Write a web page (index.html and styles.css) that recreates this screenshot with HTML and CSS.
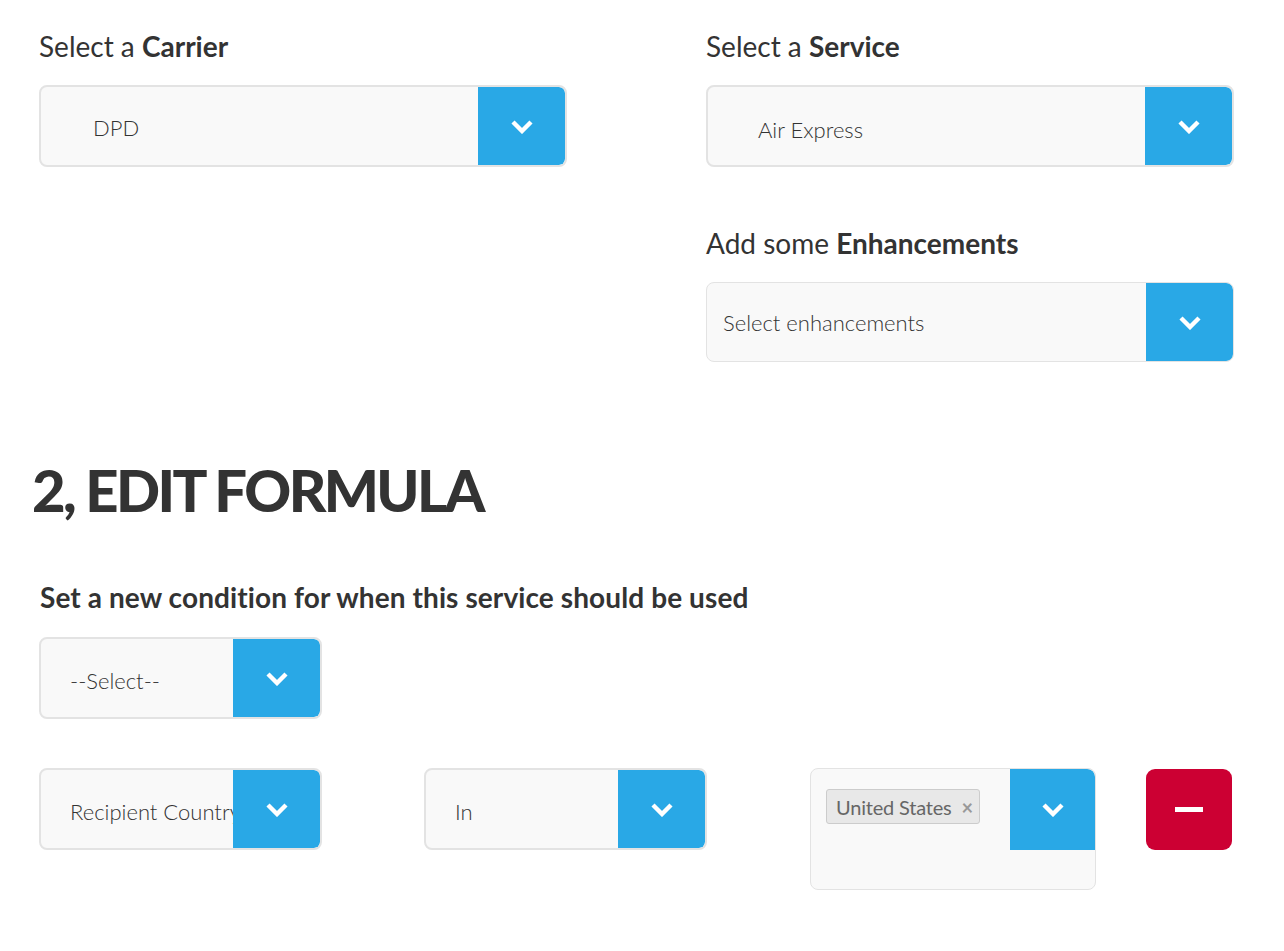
FILE: index.html
```html
<!DOCTYPE html>
<html>
<head>
<meta charset="utf-8">
<link rel="stylesheet" href="styles.css">
</head>
<body>
<div class="page">
  <div class="top">
    <div class="col">
      <div class="label">Select a <b>Carrier</b></div>
      <div class="select">
        <span class="value v-carrier">DPD</span>
        <span class="btn"><svg class="chev" viewBox="0 0 24 15"><path d="M3 3 L12 12 L21 3"/></svg></span>
      </div>
    </div>
    <div class="col">
      <div class="label">Select a <b>Service</b></div>
      <div class="select">
        <span class="value v-service">Air Express</span>
        <span class="btn"><svg class="chev" viewBox="0 0 24 15"><path d="M3 3 L12 12 L21 3"/></svg></span>
      </div>
      <div class="label label-enh">Add some <b>Enhancements</b></div>
      <div class="select select-enh">
        <span class="value v-placeholder">Select enhancements</span>
        <span class="btn"><svg class="chev" viewBox="0 0 24 15"><path d="M3 3 L12 12 L21 3"/></svg></span>
      </div>
    </div>
  </div>

  <h1 class="heading">2, EDIT FORMULA</h1>

  <div class="cond-label">Set a new condition for when this service should be used</div>

  <div class="select small">
    <span class="value v-small">--Select--</span>
    <span class="btn"><svg class="chev" viewBox="0 0 24 15"><path d="M3 3 L12 12 L21 3"/></svg></span>
  </div>

  <div class="row">
    <div class="select small">
      <span class="value v-small">Recipient Country</span>
      <span class="btn"><svg class="chev" viewBox="0 0 24 15"><path d="M3 3 L12 12 L21 3"/></svg></span>
    </div>
    <div class="select small op">
      <span class="value v-small">In</span>
      <span class="btn"><svg class="chev" viewBox="0 0 24 15"><path d="M3 3 L12 12 L21 3"/></svg></span>
    </div>
    <div class="select multi">
      <div class="tags"><span class="tag">United States <span class="x">×</span></span></div>
      <span class="btn"><svg class="chev" viewBox="0 0 24 15"><path d="M3 3 L12 12 L21 3"/></svg></span>
    </div>
    <button class="remove"><span class="minus"></span></button>
  </div>
</div>
</body>
</html>
```
FILE: styles.css
```css
* { box-sizing: border-box; }
body {
  margin: 0;
  background: #fff;
  font-family: Lato, "Liberation Sans", sans-serif;
  color: #333;
}
.page {
  padding: 26px 51px 0 39px;
}
.top {
  display: grid;
  grid-template-columns: 528px 528px;
  column-gap: 139px;
}
.label {
  font-size: 28px;
  line-height: 40px;
  font-weight: 400;
  color: #333;
  margin-bottom: 19px;
}
.label b { font-weight: 700; }
.label-enh { margin-top: 56px; margin-bottom: 19px; }
.select {
  display: flex;
  height: 82px;
  border: 2px solid #e3e3e3;
  border-radius: 8px;
  background: #f9f9f9;
  overflow: hidden;
}
.select-enh { height: 80px; border-width: 1px; }
.value {
  flex: 1;
  min-width: 0;
  display: flex;
  align-items: center;
  font-size: 22px;
  font-weight: 300;
  color: #333;
  white-space: nowrap;
  overflow: hidden;
}
.v-carrier { padding-left: 52px; padding-top: 2px; }
.v-service { padding-left: 50px; padding-top: 6px; }
.v-placeholder { padding-left: 16px; }
.v-small { padding-left: 29px; padding-top: 4px; }
.btn {
  flex: 0 0 87px;
  background: #29a8e6;
  display: flex;
  align-items: center;
  justify-content: center;
  border-radius: 0 6px 6px 0;
}
.chev {
  width: 24px;
  height: 15px;
  fill: none;
  stroke: #fff;
  stroke-width: 4.4;
  stroke-linecap: butt;
  stroke-linejoin: miter;
}
.heading {
  margin: 93px 0 0 -7px;
  font-size: 58px;
  line-height: 70px;
  font-weight: 900;
  letter-spacing: -2.6px;
  color: #333;
}
.cond-label {
  margin-top: 52px;
  margin-left: 1px;
  font-size: 28px;
  line-height: 40px;
  font-weight: 700;
  letter-spacing: 0.1px;
  color: #333;
  margin-bottom: 20px;
}
.small { width: 283px; }
.row {
  display: flex;
  align-items: flex-start;
  margin-top: 49px;
}
.row .op { margin-left: 102px; width: 283px; }
.multi {
  margin-left: 103px;
  width: 286px;
  height: 122px;
  align-items: flex-start;
  border-width: 1px;
}
.multi .btn { height: 81px; flex-basis: 85px; border-radius: 0 8px 0 0; }
.tags {
  flex: 1;
  padding: 20px 0 0 15px;
}
.tag {
  display: inline-flex;
  align-items: center;
  height: 35px;
  padding: 0 6px 0 9px;
  background: #e8e8e8;
  border: 1px solid #ccc;
  border-radius: 3px;
  font-size: 20px;
  font-weight: 400;
  color: #666;
  letter-spacing: -0.2px;
}
.tag .x {
  margin-left: 10px;
  font-size: 20px;
  font-weight: 700;
  color: #999;
}
.remove {
  margin-left: 50px;
  width: 86px;
  height: 81px;
  margin-top: 1px;
  border: none;
  border-radius: 9px;
  background: #cc0033;
  display: flex;
  align-items: center;
  justify-content: center;
  padding: 0;
}
.minus {
  width: 28px;
  height: 5px;
  background: #fff;
}
```
